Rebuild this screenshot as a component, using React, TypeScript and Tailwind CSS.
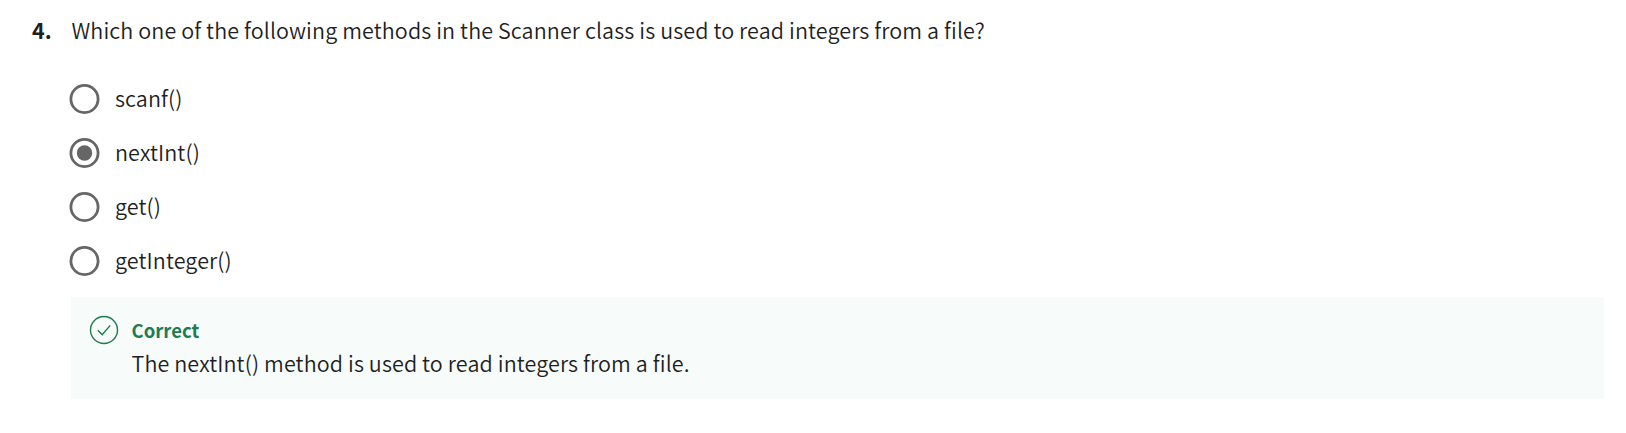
const options = [
  { label: "scanf()", checked: false },
  { label: "nextInt()", checked: true },
  { label: "get()", checked: false },
  { label: "getInteger()", checked: false },
];

function Radio({ checked }: { checked: boolean }) {
  return (
    <svg width="31" height="30" viewBox="0 0 31 30" fill="none" className="shrink-0">
      <circle cx="15.5" cy="15" r="13.6" stroke="#666666" strokeWidth="2.8" />
      {checked && <circle cx="15.5" cy="15" r="7.7" fill="#666666" />}
    </svg>
  );
}

function CorrectIcon() {
  return (
    <svg width="30" height="30" viewBox="0 0 30 30" fill="none" stroke="#1d7c50" className="shrink-0">
      <circle cx="15" cy="15" r="13.5" strokeWidth="1.4" />
      <path d="M8.8 15.2 13.2 19.6 21.2 10.4" strokeWidth="1.4" />
    </svg>
  );
}

export default function App() {
  return (
    <main className="h-[433px] w-full bg-white pt-3 pr-[22px] pl-8 font-['Noto_Sans_CJK_SC',sans-serif] text-[21.5px] leading-9 font-[350] tracking-[0.11px] text-[#1f1f1f]">
      <div className="flex">
        <span className="w-[39.5px] shrink-0 font-bold">4.</span>
        <p className="whitespace-nowrap">Which one of the following methods in the Scanner class is used to read integers from a file?</p>
      </div>
      <div className="mt-[33px] ml-[37px] flex flex-col">
        {options.map((o) => (
          <label key={o.label} className="mb-[18px] flex h-9 items-center gap-[15px]">
            <Radio checked={o.checked} />
            <span className="pb-[2px]">{o.label}</span>
          </label>
        ))}
      </div>
      <section className="ml-[39px] flex h-[102px] gap-3 bg-[#f7fbf9] pt-[18px] pl-[18px]">
        <CorrectIcon />
        <div className="flex flex-col pl-[0.5px]">
          <h2 className="text-[18.5px] leading-[30px] font-bold tracking-normal text-[#1d7c50]">Correct</h2>
          <p className="whitespace-nowrap">The nextInt() method is used to read integers from a file.</p>
        </div>
      </section>
    </main>
  );
}
